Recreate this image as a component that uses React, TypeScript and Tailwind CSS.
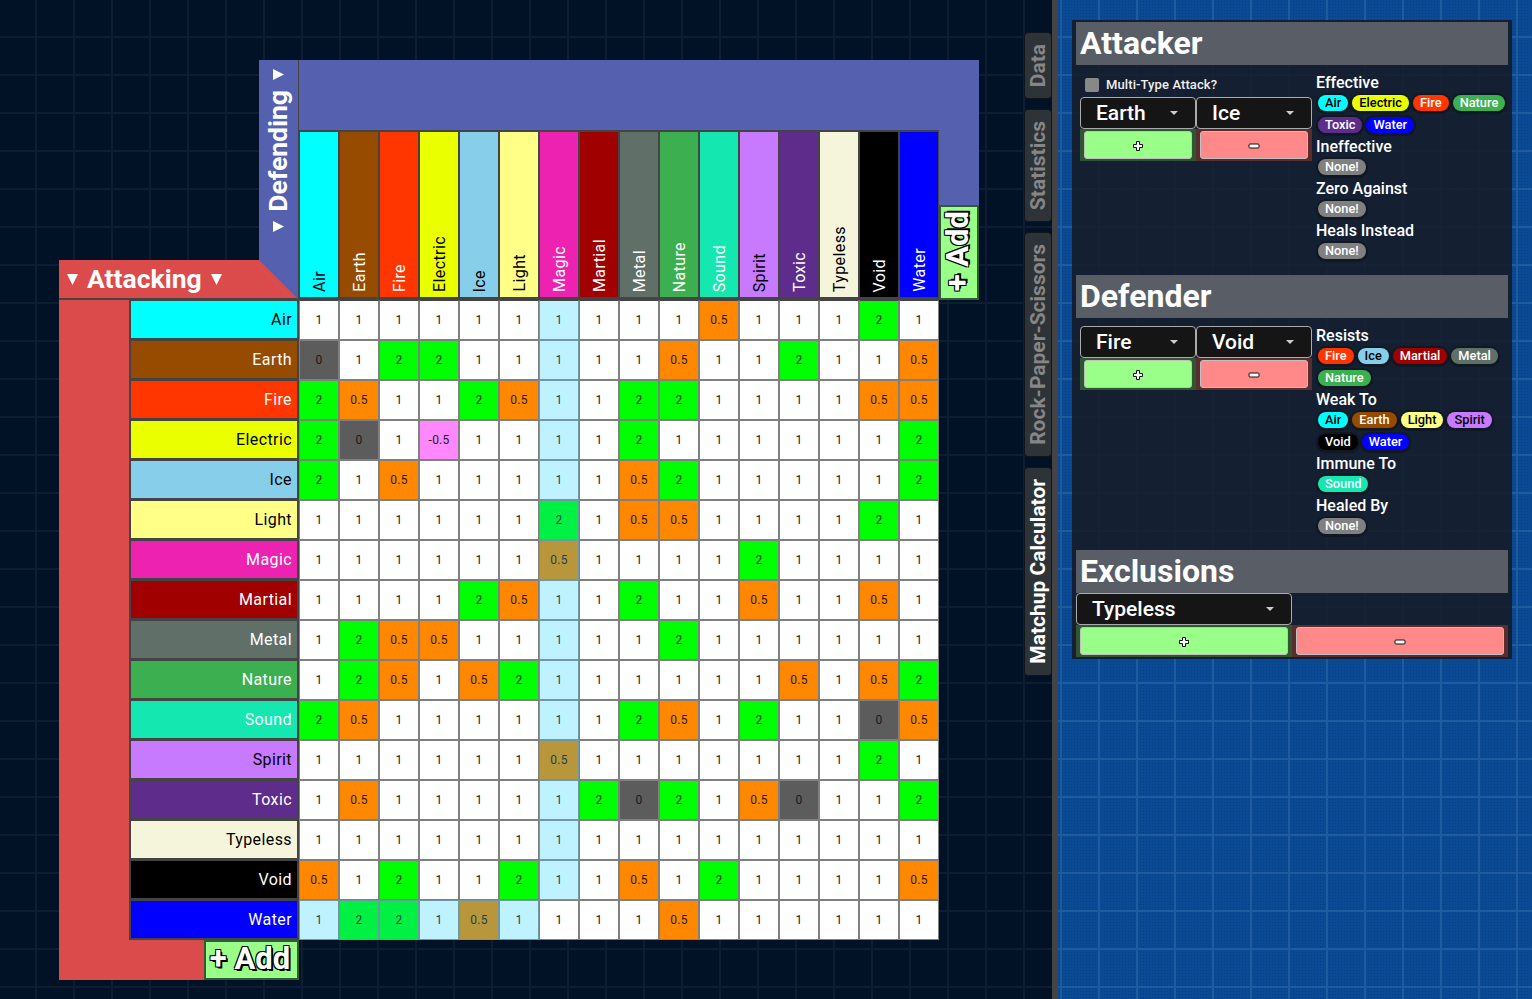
import type { ReactNode } from "react"

type TypeInfo = { name: string; bg: string; dark: boolean }

const TYPES: TypeInfo[] = [
  { name: "Air", bg: "bg-[#00ffff]", dark: true },
  { name: "Earth", bg: "bg-[#964b00]", dark: false },
  { name: "Fire", bg: "bg-[#ff3600]", dark: false },
  { name: "Electric", bg: "bg-[#eaff00]", dark: true },
  { name: "Ice", bg: "bg-[#87ceeb]", dark: true },
  { name: "Light", bg: "bg-[#ffff88]", dark: true },
  { name: "Magic", bg: "bg-[#ee22b0]", dark: false },
  { name: "Martial", bg: "bg-[#a00000]", dark: false },
  { name: "Metal", bg: "bg-[#607068]", dark: false },
  { name: "Nature", bg: "bg-[#3cb050]", dark: false },
  { name: "Sound", bg: "bg-[#14e8b0]", dark: false },
  { name: "Spirit", bg: "bg-[#c87aff]", dark: true },
  { name: "Toxic", bg: "bg-[#5e2d8c]", dark: false },
  { name: "Typeless", bg: "bg-[#f5f5dc]", dark: true },
  { name: "Void", bg: "bg-[#000000]", dark: false },
  { name: "Water", bg: "bg-[#0000ff]", dark: false },
]

const typeByName = (name: string) => TYPES.find((t) => t.name === name)

// rows = attacking, columns = defending
const MATRIX = [
  "1 1 1 1 1 1 1 1 1 1 0.5 1 1 1 2 1",
  "0 1 2 2 1 1 1 1 1 0.5 1 1 2 1 1 0.5",
  "2 0.5 1 1 2 0.5 1 1 2 2 1 1 1 1 0.5 0.5",
  "2 0 1 -0.5 1 1 1 1 2 1 1 1 1 1 1 2",
  "2 1 0.5 1 1 1 1 1 0.5 2 1 1 1 1 1 2",
  "1 1 1 1 1 1 2 1 0.5 0.5 1 1 1 1 2 1",
  "1 1 1 1 1 1 0.5 1 1 1 1 2 1 1 1 1",
  "1 1 1 1 2 0.5 1 1 2 1 1 0.5 1 1 0.5 1",
  "1 2 0.5 0.5 1 1 1 1 1 2 1 1 1 1 1 1",
  "1 2 0.5 1 0.5 2 1 1 1 1 1 1 0.5 1 0.5 2",
  "2 0.5 1 1 1 1 1 1 2 0.5 1 2 1 1 0 0.5",
  "1 1 1 1 1 1 0.5 1 1 1 1 1 1 1 2 1",
  "1 0.5 1 1 1 1 1 2 0 2 1 0.5 0 1 1 2",
  "1 1 1 1 1 1 1 1 1 1 1 1 1 1 1 1",
  "0.5 1 2 1 1 2 1 1 0.5 1 2 1 1 1 1 0.5",
  "1 2 2 1 0.5 1 1 1 1 0.5 1 1 1 1 1 1",
].map((r) => r.split(" "))

const CELL_BG: Record<string, string> = {
  "1": "bg-white",
  "2": "bg-[#00ff00]",
  "0.5": "bg-[#ff8800]",
  "0": "bg-[#5c5c5c]",
  "-0.5": "bg-[#ff88ff]",
}

const CELL_BG_HOVER: Record<string, string> = {
  "1": "bg-[#bff2ff]",
  "2": "bg-[#00f044]",
  "0.5": "bg-[#b8963c]",
}

function DataCell({ value, r, c }: { value: string; r: number; c: number }) {
  // hovered Water x Magic: the row left of it and the column above it are tinted
  const lit = (c === 6 && r < 15) || (r === 15 && c < 6)
  return (
    <div
      className={`flex h-10 w-10 items-center justify-center border text-xs tracking-[0.2px] ${
        lit ? `${CELL_BG_HOVER[value]} border-[#6f98a3] text-[#1c3f4c]` : `${CELL_BG[value]} border-[#808080] text-[#1a1a1a]`
      } ${r === 0 ? "border-t-[#444444]" : ""}`}
    >
      {value}
    </div>
  )
}

function Tri({ dir }: { dir: "down" | "right" }) {
  return (
    <svg width="11" height="11" viewBox="0 0 11 11" className="shrink-0" fill="#ffffff">
      <polygon points={dir === "down" ? "0,0 11,0 5.5,11" : "0,0 11,5.5 0,11"} />
    </svg>
  )
}

function AddButton({ vertical }: { vertical?: boolean }) {
  return (
    <div className="flex h-full w-full items-center justify-center border-2 border-[#2f5c33] bg-[#99ff88]">
      <span
        className={`whitespace-nowrap text-[31px] font-bold leading-none text-white [text-shadow:-1px_-1px_0_#000,1px_-1px_0_#000,-1px_1px_0_#000,1px_1px_0_#000,2px_2px_0_#000] ${
          vertical ? "rotate-180 pt-[3px] pl-[3px] [writing-mode:vertical-rl]" : "pr-[3px] pb-[3px]"
        }`}
      >
        + Add
      </span>
    </div>
  )
}

function Matrix() {
  return (
    <div className="grid grid-cols-[70px_130px_40px_640px_40px] grid-rows-[70px_75px_55px_40px_640px_40px]">
      {/* defending side */}
      <div className="z-10 col-start-3 row-span-4 row-start-1 flex flex-col items-center border-r border-[#444444] bg-[#5560ae] pt-[9px] [clip-path:polygon(0_0,100%_0,100%_100%,0_calc(100%-40px))]">
        <Tri dir="right" />
        <span className="mt-[10px] mb-[9px] rotate-180 whitespace-nowrap text-[26.5px] font-bold leading-none text-white [writing-mode:vertical-rl]">
          Defending
        </span>
        <Tri dir="right" />
      </div>
      <div className="col-span-2 col-start-4 row-start-1 bg-[#5560ae]" />
      <div className="col-start-5 row-start-2 bg-[#5560ae]" />
      <div className="col-start-5 row-span-2 row-start-3">
        <AddButton vertical />
      </div>
      <div className="col-start-4 row-span-3 row-start-2 flex">
        {TYPES.map((t) => (
          <div
            key={t.name}
            className={`flex w-10 items-end justify-center border-x border-t-2 border-b-[3px] border-[#444444] pb-[5px] pl-[2px] ${t.bg} ${
              t.dark ? "text-black" : "text-white"
            }`}
          >
            <span className="rotate-180 whitespace-nowrap text-base leading-none tracking-[0.4px] [writing-mode:vertical-rl]">
              {t.name}
            </span>
          </div>
        ))}
      </div>

      {/* attacking side */}
      <div className="col-span-3 col-start-1 row-start-4 flex items-center gap-[9px] border-b-2 border-[#444444] bg-[#dc4b4b] pl-[8px]">
        <Tri dir="down" />
        <span className="whitespace-nowrap text-[26.5px] font-bold leading-none text-white">Attacking</span>
        <Tri dir="down" />
      </div>
      <div className="col-start-1 row-span-2 row-start-5 bg-[#dc4b4b]" />
      <div className="col-span-2 col-start-2 row-start-5 flex flex-col">
        {TYPES.map((t) => (
          <div
            key={t.name}
            className={`flex h-10 items-center justify-end border-x-2 border-t border-b-2 border-[#444444] pr-[5px] text-base tracking-[0.4px] ${t.bg} ${
              t.dark ? "text-black" : "text-white"
            }`}
          >
            {t.name}
          </div>
        ))}
      </div>
      <div className="col-start-4 row-start-5 grid grid-cols-[repeat(16,40px)]">
        {MATRIX.map((row, r) => row.map((v, c) => <DataCell key={`${r}-${c}`} value={v} r={r} c={c} />))}
      </div>
      <div className="col-span-2 col-start-2 row-start-6 flex">
        <div className="flex-1 bg-[#dc4b4b]" />
        <div className="w-[95px]">
          <AddButton />
        </div>
      </div>
    </div>
  )
}

function Tab({ label, active }: { label: string; active?: boolean }) {
  return (
    <div
      className={`flex w-7 items-center justify-center rounded-[4px] border border-[#10151b] bg-[#2e3338] py-[11px] ${
        active ? "text-white" : "text-[#868686]"
      }`}
    >
      <span className="rotate-180 whitespace-nowrap text-[21px] font-bold leading-none [writing-mode:vertical-rl]">{label}</span>
    </div>
  )
}

function Heading({ children }: { children: ReactNode }) {
  return (
    <div className="flex h-[43px] items-center bg-[#595e66] pb-[2px] pl-[4px] text-[32px] font-bold leading-none text-white">
      {children}
    </div>
  )
}

function Dropdown({ label, wide }: { label: string; wide?: boolean }) {
  return (
    <div
      className={`flex h-8 items-center justify-between rounded-[4px] border border-[#aaaaaa] bg-[#151515] pl-[15px] text-[21px] font-medium text-white ${
        wide ? "w-[216px] pr-[17px]" : "w-[116px] pr-[17px]"
      }`}
    >
      <span className="pt-px">{label}</span>
      <svg width="8" height="4" viewBox="0 0 8 4" fill="#cccccc">
        <polygon points="0,0 8,0 4,4" />
      </svg>
    </div>
  )
}

function PlusIcon() {
  return (
    <svg width="12" height="12" viewBox="0 0 12 12" className="mt-0.5">
      <path d="M4.5 1.5h3v3h3v3h-3v3h-3v-3h-3v-3h3z" fill="#ffffff" stroke="#111111" strokeWidth="1" strokeLinejoin="round" />
    </svg>
  )
}

function MinusIcon() {
  return (
    <svg width="12" height="6" viewBox="0 0 12 6" className="mt-0.5">
      <rect x="1" y="1" width="10" height="4" rx="1" fill="#ffffff" stroke="#111111" strokeWidth="1" />
    </svg>
  )
}

function ActionButton({ kind }: { kind: "add" | "remove" }) {
  const add = kind === "add"
  return (
    <div className={`flex h-8 flex-1 px-1 py-[2px] ${add ? "bg-[#2f5531]" : "bg-[#5a2c2e]"}`}>
      <div
        className={`flex flex-1 items-center justify-center rounded-[3px] border border-[#c0c0c0] ${
          add ? "bg-[#99ff88]" : "bg-[#ff8888]"
        }`}
      >
        {add ? <PlusIcon /> : <MinusIcon />}
      </div>
    </div>
  )
}

function Picker({ a, b }: { a: string; b: string }) {
  return (
    <div className="w-[232px]">
      <div className="flex">
        <Dropdown label={a} />
        <Dropdown label={b} />
      </div>
      <div className="flex">
        <ActionButton kind="add" />
        <ActionButton kind="remove" />
      </div>
    </div>
  )
}

function Chip({ name }: { name: string }) {
  const t = typeByName(name)
  return (
    <span
      className={`h-4 rounded-full px-[7px] text-[12.8px] font-medium leading-4 shadow-[0_0_0_2px_#0f1823,0_1px_0_2px_#0f1823] ${
        t ? t.bg : "bg-[#808080]"
      } ${t?.dark ? "text-black" : "text-white"}`}
    >
      {name}
    </span>
  )
}

function Matchups({ groups }: { groups: [string, string[]][] }) {
  return (
    <div className="flex-1">
      {groups.map(([title, chips]) => (
        <div key={title}>
          <div className="h-5 pt-px text-base font-medium leading-5 text-white">{title}</div>
          <div className="flex flex-wrap gap-x-1 gap-y-1.5 py-[3px] pl-0.5">
            {chips.map((c) => (
              <Chip key={c} name={c} />
            ))}
          </div>
        </div>
      ))}
    </div>
  )
}

function Panel() {
  return (
    <div className="flex w-[440px] flex-col bg-[#151c27]/90 px-1 pt-0.5 pb-0.5">
      <Heading>Attacker</Heading>
      <div className="flex h-[210px] gap-1 pt-[7px]">
        <div className="pl-1">
          <div className="flex h-[25px] items-center gap-[7px] pl-[5px] text-[13px] font-medium tracking-[0.1px] text-[#eeeeee]">
            <span className="h-[14px] w-[14px] rounded-[2px] bg-[#888888]" />
            Multi-Type Attack?
          </div>
          <Picker a="Earth" b="Ice" />
        </div>
        <Matchups
          groups={[
            ["Effective", ["Air", "Electric", "Fire", "Nature", "Toxic", "Water"]],
            ["Ineffective", ["None!"]],
            ["Zero Against", ["None!"]],
            ["Heals Instead", ["None!"]],
          ]}
        />
      </div>
      <Heading>Defender</Heading>
      <div className="flex h-[232px] gap-1 pt-[7px]">
        <div className="pt-px pl-1">
          <Picker a="Fire" b="Void" />
        </div>
        <Matchups
          groups={[
            ["Resists", ["Fire", "Ice", "Martial", "Metal", "Nature"]],
            ["Weak To", ["Air", "Earth", "Light", "Spirit", "Void", "Water"]],
            ["Immune To", ["Sound"]],
            ["Healed By", ["None!"]],
          ]}
        />
      </div>
      <Heading>Exclusions</Heading>
      <Dropdown label="Typeless" wide />
      <div className="flex">
        <ActionButton kind="add" />
        <ActionButton kind="remove" />
      </div>
    </div>
  )
}

export default function App() {
  return (
    <div className="flex h-[999px] w-[1532px] overflow-hidden [font-family:Roboto,sans-serif]">
      <div className="flex w-[1052px] bg-[#011226] pt-[60px] pl-[59px] [background-image:linear-gradient(to_right,#0e1d31_2px,transparent_2px),linear-gradient(to_bottom,#0e1d31_2px,transparent_2px)] [background-position:35px_36px] [background-size:38px_38px]">
        <Matrix />
        <div className="-mt-[28px] ml-[45px] flex flex-col gap-[10px]">
          <Tab label="Data" />
          <Tab label="Statistics" />
          <Tab label="Rock-Paper-Scissors" />
          <Tab label="Matchup Calculator" active />
        </div>
      </div>
      <div className="w-1.5 bg-[#444444]" />
      <div className="flex-1 bg-[#0a4a94] pt-5 pl-[14px] [background-image:linear-gradient(to_right,#1f5b9f_2px,transparent_2px),linear-gradient(to_bottom,#1f5b9f_2px,transparent_2px),radial-gradient(#083f82_1px,transparent_1px)] [background-position:2px_36px,2px_36px,0_0] [background-size:38px_38px,38px_38px,3px_3px]">
        <Panel />
      </div>
    </div>
  )
}
